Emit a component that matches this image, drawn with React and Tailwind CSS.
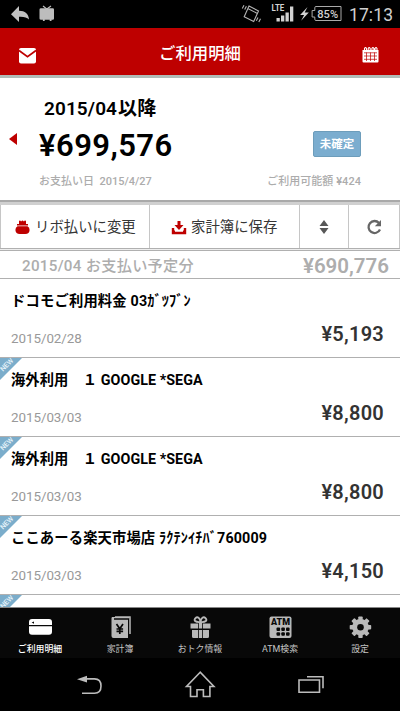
import React from "react";

const jp = "font-[Roboto,'Noto_Sans_CJK_JP',sans-serif]";

function StatusBar() {
  return (
    <div className="flex h-7 shrink-0 bg-black text-[#c4c4c4]">
      <svg width="345" height="28" viewBox="0 0 345 28" fill="none">
        <path d="M11 14.2 19 6v4.7c6 .1 9.7 3 10 8.8-2.3-2-5-3-10-2.7V22z" fill="#c1c1c1" />
        <path d="M41 8.2h11.7q1.3 0 1.3 1.3v9q0 1.3-1.3 1.3h-1.2V21h-1.8v-1.2h-5V21h-1.8v-1.2H41q-1.5 0-1.5-1.3v-9q0-1.3 1.5-1.3z" fill="#bdbdbd" />
        <path d="m43 6 3.800 3L51 6" stroke="#bdbdbd" strokeWidth="1.2" />
        <g stroke="#b5b5b5" strokeWidth="1.1">
          <path d="m249 6 9.5 5-4.8 10.5-9.5-4.8zM247.8 8.6l9.5 4.8" />
          <path d="m242.3 8.5 1.7-3.3M244.700 9.5l1.7-3.3M256.3 20.7l1.7-3.2M258.8 22l1.7-3.2" />
        </g>
        <g fill="#d2d2d2">
          <path d="M276.5 18h3.300v3.5h-3.300zM281 15.5h3.300v6H281zM285.5 12.5h3.300v9h-3.300zM290 6.5h3.300v15H290z" />
          <path d="m307.5 7-7.4 8h4l-3 5.8 7.7-8.200h-4.100z" />
        </g>
        <text x="271.5" y="10.6" fontFamily="Roboto, sans-serif" fontSize="9" fontWeight="700" fill="#d2d2d2" textLength="12.8" lengthAdjust="spacingAndGlyphs">LTE</text>
        <path d="M316 6.500h25V20.500h-25q-1.200 0-1.200-1.200V17h-2.700v-6.500h2.700V7.700q0-1.200 1.200-1.200z" stroke="#a9a9a9" />
        <text x="317.3" y="17.7" fontFamily="Roboto, sans-serif" fontSize="11.3" fontWeight="500" fill="#d2d2d2" textLength="20.8" lengthAdjust="spacingAndGlyphs">85%</text>
      </svg>
      <span className="ml-[4px] font-[Roboto,sans-serif] text-[17.5px] leading-[30px] tracking-[0.1px] whitespace-nowrap text-[#d0d0d0]">17:13</span>
    </div>
  );
}

function Header() {
  return (
    <header className="flex h-[47px] shrink-0 items-center justify-between bg-[#be0000] px-[18px] text-white">
      <svg width="19" height="17" viewBox="0 0 19 17" className="mt-[7px]">
        <rect x="1" y="1" width="17" height="15.5" rx="2" fill="#fff" />
        <path d="m1 3.5 8.5 6.200L18 3.5" fill="none" stroke="#be0000" strokeWidth="1.7" />
      </svg>
      <h1 className={`${jp} mt-[5px] ml-[1px] text-[16.4px] leading-6 font-medium`}>ご利用明細</h1>
      <svg width="17" height="17" viewBox="0 0 17 17" className="mt-[6px] mr-[3px]">
        <path d="M.5 4h16v11.5q0 1-1 1h-14q-1 0-1-1z" fill="#fff" />
        <path d="M2.500 5V2.500q1-2 2 0V5M6.200 5V2.500q1-2 2 0V5M9.900 5V2.500q1-2 2 0V5M13 5V2.500q1-2 2 0V5" stroke="#fff" strokeWidth="1.1" fill="none" />
        <path d="M2 6.800h13M2 10h13M2 13.300h13M4.500 6.500v8.500M8.500 6.500v8.500M12.500 6.500v8.500" stroke="#be0000" strokeWidth=".7" />
      </svg>
    </header>
  );
}

function Summary() {
  return (
    <section className={`${jp} flex h-[127px] shrink-0 border-t-[3px] border-b-2 border-t-[#b1bcb7] border-b-[#a9a9a9] bg-white`}>
      <svg width="8" height="12" viewBox="0 0 8 12" className="mt-[55px] ml-[9px] shrink-0"><path d="M0 6 8 0v12z" fill="#be0000" /></svg>
      <div className="ml-[22px] flex flex-1 flex-col">
        <div className="mt-[19px] ml-[5px] text-[19px] leading-6 font-semibold tracking-[0.1px] whitespace-nowrap text-black">2015/04<span className="ml-px font-bold">以降</span></div>
        <div className="flex h-[42px] items-start justify-between pr-[39px]">
          <div className="mt-[7px] text-[31px] leading-9 font-semibold tracking-[0.45px] text-black">¥699,576</div>
          <div className="mt-[10px] flex h-[26px] w-12 items-center justify-center rounded-[2px] border border-[#6d9dbb] bg-[#7badcf] pt-px text-[11.5px] font-bold text-white">未確定</div>
        </div>
        <div className="mt-[11px] flex justify-between pr-[39px] text-[11px] leading-4 font-medium text-[#acacac]">
          <span>お支払い日&nbsp; 2015/4/27</span>
          <span className="tracking-[0.05px]">ご利用可能額 ¥424</span>
        </div>
      </div>
    </section>
  );
}

function Toolbar() {
  return (
    <div className={`${jp} flex h-[47px] shrink-0 border-t-[3px] border-b border-t-[#d0d0d0] border-b-[#b0b0b0] bg-white text-[14.4px] text-[#363636]`}>
      <div className="flex w-[150px] items-center border-r border-l border-[#c6c6c6] pt-0.5 pl-[14px]">
        <svg width="15" height="15" viewBox="0 0 15 15" fill="#be0000"><path d="M4 4V1.300q0-.8.900-.8t.9.800h.8q0-.8.900-.8t.9.800h.8q0-.8.900-.8t.9.800V4zM2 4h11v1.500H2zM2.500 6.200h10Q14.700 7.500 14.600 10q-.2 4-4.300 4H4.700q-4 0-4.300-4 0-2.500 2.100-3.800z" /></svg>
        <span className="ml-[5px] whitespace-nowrap">リボ払いに変更</span>
      </div>
      <div className="flex w-[150px] items-center border-r border-[#c6c6c6] pt-0.5 pl-[21px]">
        <svg width="16" height="15" viewBox="0 0 16 15"><path d="M8 1v5" stroke="#be0000" strokeWidth="3" /><path d="M3.5 5h9L8 10z" fill="#be0000" /><path d="M2 8v5h12V8" fill="none" stroke="#be0000" strokeWidth="2.4" /><path d="M1 13h14M3 10.500v2M13 10.500v2" stroke="#be0000" strokeWidth="2" /></svg>
        <span className="ml-[4px] whitespace-nowrap">家計簿に保存</span>
      </div>
      <div className="flex w-[49px] items-center justify-center border-r border-[#c6c6c6]">
        <svg width="10" height="14" viewBox="0 0 10 14" fill="#585858"><path d="M5 0 9.5 6h-9zM.5 8h9L5 14z" /></svg>
      </div>
      <div className="flex flex-1 items-center justify-center border-r border-[#c6c6c6] pt-0.5">
        <svg width="17" height="17" viewBox="0 0 17 17"><path d="M13 4A6 6 0 1 0 14 10.5" fill="none" stroke="#666" strokeWidth="2.3" /><path d="M15 1v6.300H8.800z" fill="#666" /></svg>
      </div>
    </div>
  );
}

const items = [
  { title: "ドコモご利用料金 03ｶﾞﾂﾌﾞﾝ", date: "2015/02/28", amount: "¥5,193", spacing: "tracking-[0.18px]" },
  { title: "海外利用　１ GOOGLE *SEGA", date: "2015/03/03", amount: "¥8,800", spacing: "tracking-[0.06px]", fresh: true },
  { title: "海外利用　１ GOOGLE *SEGA", date: "2015/03/03", amount: "¥8,800", spacing: "tracking-[0.06px]", fresh: true },
  { title: "ここあーる楽天市場店 ﾗｸﾃﾝｲﾁﾊﾞ760009", date: "2015/03/03", amount: "¥4,150", spacing: "tracking-[0.13px]", fresh: true },
  { title: "", date: "", amount: "", spacing: "", fresh: true },
];

function NewRibbon() {
  return (
    <span className="absolute top-0 left-0 h-[22px] w-[22px]">
      <span className="absolute top-0 left-0 h-[22px] w-[22px] bg-[#7badcb] [clip-path:polygon(0_0,100%_0,0_100%)]" />
      <span className="absolute top-[3px] left-[-1px] w-[16px] -rotate-45 text-center font-[Roboto,sans-serif] text-[7px] leading-[8px] font-medium tracking-[0.1px] text-[#e7f3fa]">NEW</span>
    </span>
  );
}

function Item({ title, date, amount, spacing, fresh }) {
  return (
    <li className={`${jp} relative h-[79px] shrink-0 border-b border-[#b0b0b0] pr-4 pl-[11px]`}>
      {fresh && <NewRibbon />}
      <div className={`relative pt-[10px] text-[14.3px] leading-6 font-bold whitespace-pre text-black ${spacing}`}>{title}</div>
      <div className="flex justify-between pt-[8px]">
        <span className="pt-[6px] text-[13.4px] leading-6 tracking-[-0.05px] text-[#999]">{date}</span>
        <span className="text-[20px] leading-[26px] font-semibold tracking-[0.25px] text-[#333]">{amount}</span>
      </div>
    </li>
  );
}

const g = "#b9b9b9";
const tabs = [
  { label: "ご利用明細", active: true, icon: <><path d="M3 1h17q3 0 3 3v3H0V4q0-3 3-3zM0 8.200h23v5.500Q23 16.700 20 16.700H3q-3 0-3-3z" fill="#fff" transform="translate(0 2)" /><path d="M2.600 6.600 5 5.500v2.300z" fill="#080808" /></> },
  { label: "家計簿", icon: <><path d="M6 1h15v17" fill="none" stroke={g} strokeWidth="1.5" /><path d="M3 1h17v1.300H5v1.500h14V22H4.500Q2.500 22 2.500 20V2z" fill={g} /><path d="m7.500 8 3.300 4.800L14 8M10.800 12.800V18M7.500 13h6.600M7.500 15.400h6.600" fill="none" stroke="#080808" strokeWidth="1.7" /></> },
  { label: "おトク情報", icon: <><path d="M11.500 6C6 6.500 4.500 4.200 6.500 2.200S11 2 11.500 6c.5-4 3-5.800 5-3.800S17 6.500 11.500 6z" fill="none" stroke={g} strokeWidth="1.9" /><path d="M1.500 7.500H9v5H1.500zM9.800 6.800h3.400v5.700H9.800zM14 7.500h7.500v5H14zM3 14h6v8H4.500Q3 22 3 20.500zM9.800 14h3.400v8H9.800zM14 14h6v6.500q0 1.500-1.500 1.500H14z" fill={g} /></> },
  { label: "ATM検索", icon: <><rect x=".5" y=".5" width="22" height="21.5" rx="2" fill={g} /><text x="2" y="9.3" fontFamily="Roboto, sans-serif" fontWeight="900" fontSize="9.5" fill="#080808" textLength="19" lengthAdjust="spacingAndGlyphs">ATM</text><g fill="#080808"><rect x="7.5" y="11.5" width="3.6" height="3.5" rx="1" /><rect x="12.3" y="11.5" width="3.6" height="3.5" rx="1" /><rect x="17" y="11.5" width="3.6" height="3.5" rx="1" /><rect x="7.5" y="16.3" width="3.6" height="3.5" rx="1" /><rect x="12.3" y="16.3" width="3.6" height="3.5" rx="1" /><rect x="17" y="16.3" width="3.6" height="3.5" rx="1" /></g></> },
  { label: "設定", icon: <><g fill={g}><circle cx="11.5" cy="11.2" r="8.3" /><rect x="9.3" y=".5" width="4.4" height="21.5" rx=".8" /><rect x="9.3" y=".5" width="4.4" height="21.5" rx=".8" transform="rotate(45 11.5 11.2)" /><rect x="9.3" y=".5" width="4.4" height="21.5" rx=".8" transform="rotate(90 11.5 11.2)" /><rect x="9.3" y=".5" width="4.4" height="21.5" rx=".8" transform="rotate(135 11.5 11.2)" /></g><circle cx="11.5" cy="11.2" r="3.3" fill="#080808" /></> },
];

function TabBar() {
  return (
    <nav className="grid h-[51px] shrink-0 grid-cols-5 border-t border-[#888] bg-[#080808]">
      {tabs.map((t) => (
        <div key={t.label} className={`${jp} flex flex-col items-center pt-[8px] text-[8.9px] leading-[20px] whitespace-nowrap ${t.active ? "font-medium text-white" : "text-[#c4c4c4]"}`}>
          <svg width="23" height="23" viewBox="0 0 23 23">{t.icon}</svg>
          <span>{t.label}</span>
        </div>
      ))}
    </nav>
  );
}

function NavBar() {
  return (
    <div className="flex h-[53px] shrink-0 bg-black">
      <svg width="400" height="53" viewBox="0 0 400 53" fill="none" stroke="#bcbcbc" strokeWidth="1.6">
        <path d="M82 35.300h12.500q6.500 0 6.500-7.200t-6.500-7.200H85" />
        <path d="m77 21.200 10-3.400v6.600z" fill="#bcbcbc" stroke="none" />
        <path d="m200.200 14.200-13.700 14.300h4V38.500h6.500v-6.800h6.400v6.800h6.500V28.500h4z" />
        <path d="M299 22h20.500v12.300H299zM307 18.700h16v11.600" />
      </svg>
    </div>
  );
}

export default function App() {
  return (
    <div className="flex h-[711px] w-[400px] flex-col overflow-hidden bg-black">
      <StatusBar />
      <Header />
      <Summary />
      <Toolbar />
      <div className="h-px shrink-0 bg-[#eee]" />
      <div className={`${jp} flex h-[29px] shrink-0 items-center justify-between border-t border-b border-[#b0b0b0] bg-white pt-[3px] pr-[11px] pl-[22px] font-semibold text-[#adadad]`}>
        <span className="text-[15.2px] leading-6 font-medium tracking-[0.28px]">2015/04 お支払い予定分</span>
        <span className="text-[20.5px] leading-6">¥690,776</span>
      </div>
      <ul className="flex h-[328px] shrink-0 flex-col overflow-hidden bg-white">
        {items.map((item, i) => <Item key={i} {...item} />)}
      </ul>
      <TabBar />
      <NavBar />
    </div>
  );
}
